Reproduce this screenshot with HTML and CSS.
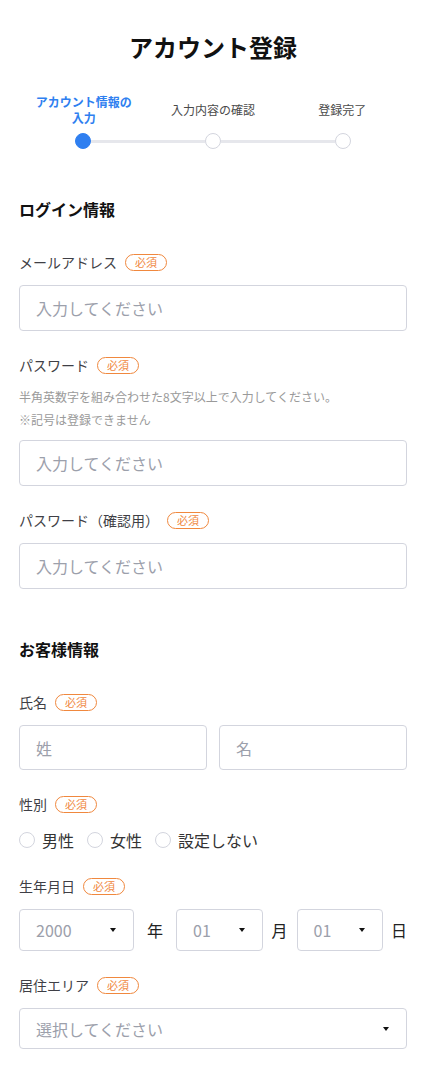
FILE: index.html
```html
<!DOCTYPE html>
<html lang="ja">
<head>
  <meta charset="UTF-8">
  <meta name="viewport" content="width=device-width, initial-scale=1.0">
  <title>アカウント登録</title>
  <link rel="stylesheet" href="styles.css">
</head>
<body>
  <div class="page">
    <h1 class="title">アカウント登録</h1>

    <div class="stepper">
      <div class="step-labels">
        <div class="step-label active">アカウント情報の入力</div>
        <div class="step-label">入力内容の確認</div>
        <div class="step-label">登録完了</div>
      </div>
      <div class="step-track">
        <span class="dot active"></span>
        <span class="bar"></span>
        <span class="dot"></span>
        <span class="bar"></span>
        <span class="dot"></span>
      </div>
    </div>

    <section class="section">
      <h2 class="section-title">ログイン情報</h2>

      <div class="field">
        <div class="label">メールアドレス<span class="badge">必須</span></div>
        <input class="input" type="email" placeholder="入力してください">
      </div>

      <div class="field">
        <div class="label">パスワード<span class="badge">必須</span></div>
        <div class="hint">
          <p>半角英数字を組み合わせた8文字以上で入力してください。</p>
          <p>※記号は登録できません</p>
        </div>
        <input class="input" type="password" placeholder="入力してください">
      </div>

      <div class="field">
        <div class="label">パスワード（確認用）<span class="badge">必須</span></div>
        <input class="input" type="password" placeholder="入力してください">
      </div>
    </section>

    <section class="section customer">
      <h2 class="section-title">お客様情報</h2>

      <div class="field">
        <div class="label">氏名<span class="badge">必須</span></div>
        <div class="name-row">
          <input class="input" type="text" placeholder="姓">
          <input class="input" type="text" placeholder="名">
        </div>
      </div>

      <div class="field">
        <div class="label">性別<span class="badge">必須</span></div>
        <div class="radios">
          <label class="radio"><span class="radio-circle"></span>男性</label>
          <label class="radio"><span class="radio-circle"></span>女性</label>
          <label class="radio"><span class="radio-circle"></span>設定しない</label>
        </div>
      </div>

      <div class="field">
        <div class="label">生年月日<span class="badge">必須</span></div>
        <div class="date-row">
          <div class="select year"><span>2000</span><span class="caret"></span></div>
          <span class="unit unit-year">年</span>
          <div class="select"><span>01</span><span class="caret"></span></div>
          <span class="unit unit-month">月</span>
          <div class="select"><span>01</span><span class="caret"></span></div>
          <span class="unit unit-day">日</span>
        </div>
      </div>

      <div class="field">
        <div class="label">居住エリア<span class="badge">必須</span></div>
        <div class="select wide"><span>選択してください</span><span class="caret"></span></div>
      </div>
    </section>
  </div>
</body>
</html>
```

FILE: styles.css
```css
body {
  margin: 0;
  background: #fff;
  color: #333;
  font-family: "Noto Sans CJK JP", "Noto Sans", sans-serif;
}

.page {
  padding: 29px 19px 40px;
}

.title {
  margin: 0;
  font-size: 24px;
  line-height: 36px;
  font-weight: bold;
  color: #111;
  text-align: center;
}

/* stepper */
.stepper {
  margin-top: 29px;
}

.step-labels {
  display: grid;
  grid-template-columns: repeat(3, 1fr);
  align-items: center;
  height: 32px;
}

.step-label {
  padding: 0 12px;
  font-size: 12px;
  line-height: 16px;
  text-align: center;
  color: #4a4a4a;
}

.step-label.active {
  color: #2f7ff0;
  font-weight: bold;
}

.step-track {
  display: flex;
  align-items: center;
  padding: 0 56px;
  margin-top: 7px;
}

.dot {
  width: 16px;
  height: 16px;
  box-sizing: border-box;
  border-radius: 50%;
  border: 1px solid #d3d5de;
  background: #fff;
  flex: none;
}

.dot.active {
  background: #2f7ff0;
  border-color: #2f7ff0;
}

.bar {
  flex: 1;
  height: 3px;
  background: #e6e7ec;
}

/* sections */
.section {
  margin-top: 48px;
}

.section.customer {
  margin-top: 48px;
}

.section-title {
  margin: 0 0 31px;
  font-size: 16px;
  line-height: 24px;
  font-weight: bold;
  color: #111;
}

.field {
  margin-bottom: 24px;
}

.label {
  display: flex;
  align-items: center;
  height: 20px;
  margin-bottom: 13px;
  font-size: 14px;
  color: #3f3f46;
}

.badge {
  display: inline-flex;
  align-items: center;
  height: 17px;
  box-sizing: border-box;
  margin-left: 8px;
  padding: 0 9px;
  border: 1px solid #f0883e;
  border-radius: 9px;
  color: #f0883e;
  font-size: 11px;
}

.hint {
  margin: -3px 0 9px;
  font-size: 12px;
  line-height: 23px;
  color: #9a9a9a;
}

.hint p {
  margin: 0;
}

.input {
  display: block;
  width: 100%;
  height: 46px;
  box-sizing: border-box;
  padding: 0 16px;
  border: 1px solid #d3d5de;
  border-radius: 4px;
  font-family: inherit;
  font-size: 16px;
  color: #333;
  outline: none;
}

.input::placeholder {
  color: #9ca0ab;
}

.name-row {
  display: flex;
  gap: 12px;
}

.name-row .input {
  height: 45px;
  flex: 1;
  min-width: 0;
}

/* radios */
.radios {
  display: flex;
  align-items: center;
  gap: 13px;
  height: 25px;
}

.radio {
  display: flex;
  align-items: center;
  gap: 7px;
  font-size: 16px;
  color: #333;
}

.radio-circle {
  width: 16px;
  height: 16px;
  box-sizing: border-box;
  border: 1px solid #d3d5de;
  border-radius: 50%;
}

/* selects */
.date-row {
  display: flex;
  align-items: center;
}

.select {
  display: flex;
  align-items: center;
  justify-content: space-between;
  flex: 1;
  height: 42px;
  box-sizing: border-box;
  padding: 0 17px 0 16px;
  border: 1px solid #d3d5de;
  border-radius: 4px;
  font-size: 16px;
  color: #9ca0ab;
}

.select.year {
  flex: 0 0 115px;
}

.select.wide {
  height: 41px;
}

.caret {
  width: 0;
  height: 0;
  border-left: 3.5px solid transparent;
  border-right: 3.5px solid transparent;
  border-top: 4px solid #111;
}

.unit {
  font-size: 16px;
  color: #222;
  text-align: center;
}

.unit-year {
  flex: 0 0 42px;
}

.unit-month {
  flex: 0 0 34px;
}

.unit-day {
  flex: 0 0 24px;
  text-align: right;
}
```
